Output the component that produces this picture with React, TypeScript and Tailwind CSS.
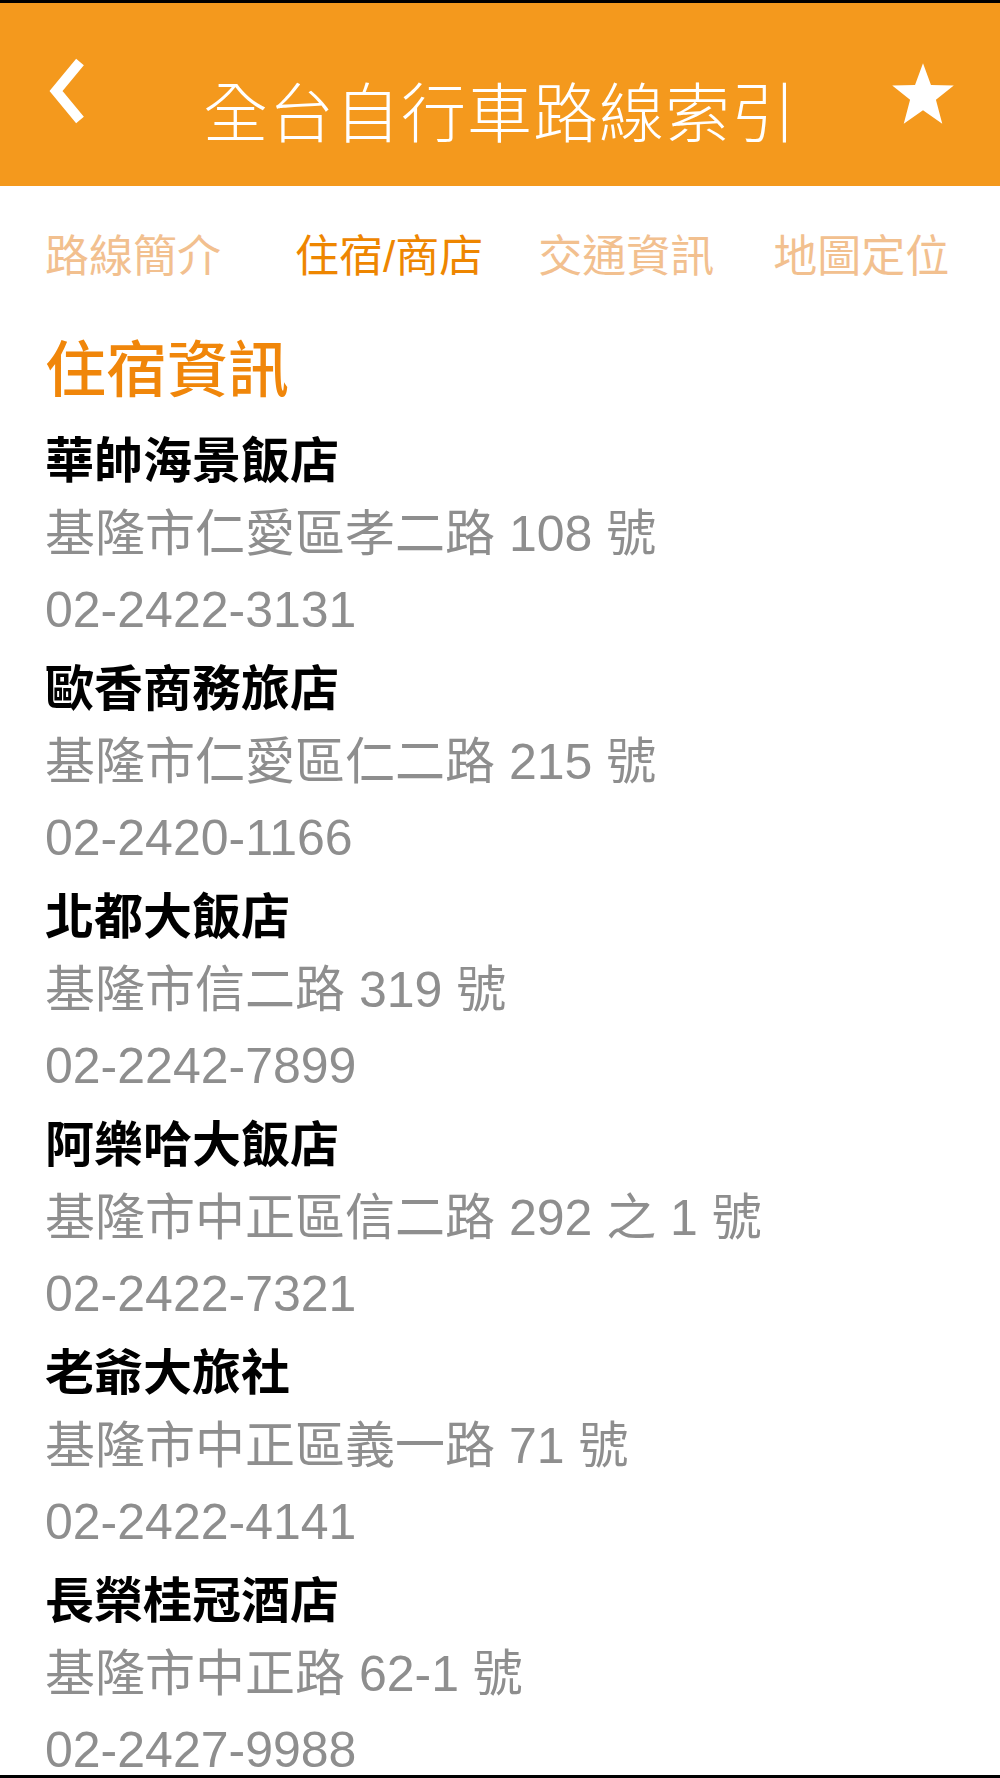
import { Fragment } from 'react';

const hotels = [
  { name: '華帥海景飯店', address: '基隆市仁愛區孝二路 108 號', phone: '02-2422-3131' },
  { name: '歐香商務旅店', address: '基隆市仁愛區仁二路 215 號', phone: '02-2420-1166' },
  { name: '北都大飯店', address: '基隆市信二路 319 號', phone: '02-2242-7899' },
  { name: '阿樂哈大飯店', address: '基隆市中正區信二路 292 之 1 號', phone: '02-2422-7321' },
  { name: '老爺大旅社', address: '基隆市中正區義一路 71 號', phone: '02-2422-4141' },
  { name: '長榮桂冠酒店', address: '基隆市中正路 62-1 號', phone: '02-2427-9988' },
];

const font = "font-['Liberation_Sans','Noto_Sans_CJK_TC',sans-serif]";

export default function App() {
  return (
    <div className={`w-[1000px] h-[1778px] overflow-hidden bg-white border-y-[3px] border-black ${font}`}>
      {/* header */}
      <header className="h-[183px] bg-[#f4991d] flex items-start text-white">
        <div className="w-[130px] pt-[52px] pl-[43px]">
          <svg width="44" height="72" viewBox="0 0 44 72" fill="none">
            <polyline points="37,7 13,36 37,65" stroke="white" strokeWidth="10" strokeLinejoin="miter" />
          </svg>
        </div>
        <h1 className="flex-1 text-center text-[65px] leading-[64px] font-light mt-[80px] tracking-[1px]">
          全台自行車路線索引
        </h1>
        <div className="w-[130px] pt-[58px] flex justify-end pr-[44px]">
          <svg width="66" height="66" viewBox="0 0 24 24" fill="white">
            <polygon points="12,0.8 14.9,8.7 23.2,8.9 16.7,14.1 19,22.8 12,17.9 5,22.8 7.3,14.1 0.8,8.9 9.1,8.7" />
          </svg>
        </div>
      </header>

      {/* tabs */}
      <nav className="flex pl-[45px] pt-[41px] text-[44px] leading-[60px] text-[#f2c08f]">
        <span>路線簡介</span>
        <span className="ml-[74px] text-[#ee8600]">住宿/商店</span>
        <span className="ml-[55px]">交通資訊</span>
        <span className="ml-[59px]">地圖定位</span>
      </nav>

      <main className="px-[45px] mt-[46px]">
        <h2 className="text-[61px] leading-[76px] font-medium text-[#f0860a]">住宿資訊</h2>
        <ul className="mt-[11px]">
          {hotels.map((h) => (
            <Fragment key={h.name}>
              <li className="text-[49px] leading-[76px] font-bold text-black translate-y-[3px]">{h.name}</li>
              <li className="text-[50px] leading-[76px] text-[#8e8e8e]">{h.address}</li>
              <li className="text-[50px] leading-[76px] text-[#8e8e8e]">{h.phone}</li>
            </Fragment>
          ))}
        </ul>
      </main>
    </div>
  );
}
